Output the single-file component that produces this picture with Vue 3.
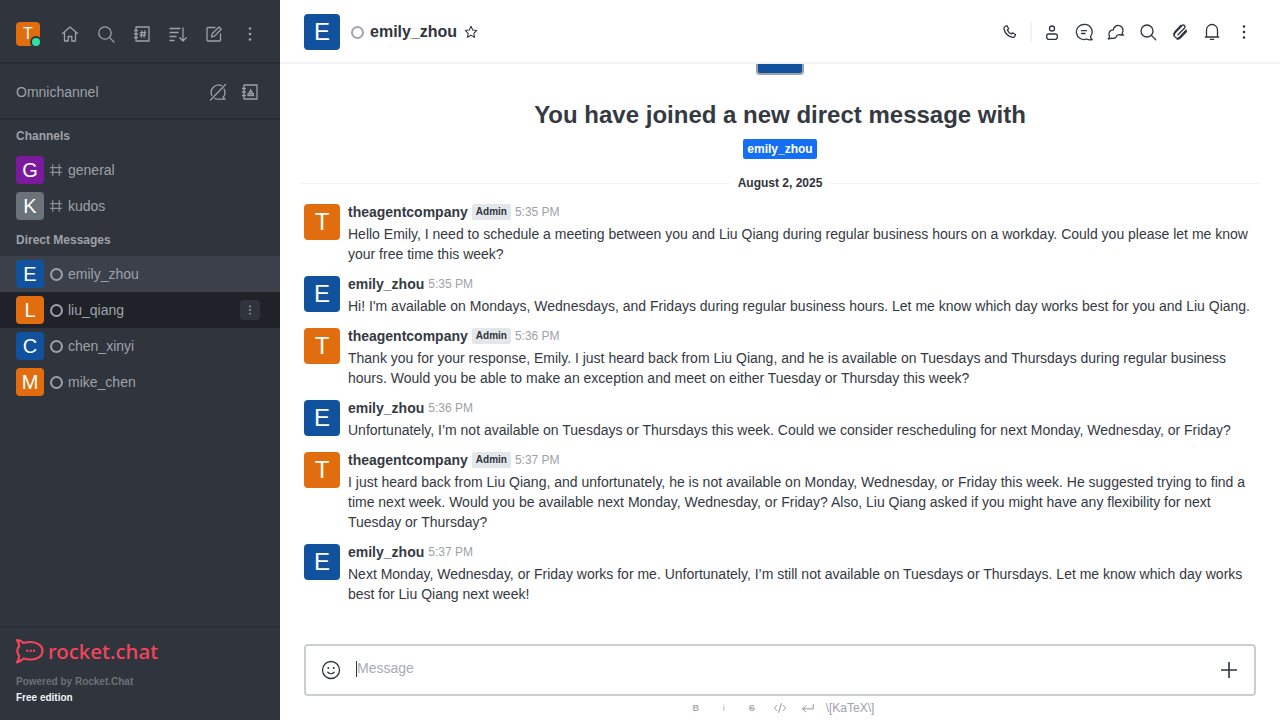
<script setup>
const channels = [
  { l: 'G', c: '#7b1a9c', n: 'general' },
  { l: 'K', c: '#6c727a', n: 'kudos' },
]
const dms = [
  { l: 'E', c: '#10529e', n: 'emily_zhou', cls: 'hover' },
  { l: 'L', c: '#e26d0e', n: 'liu_qiang', cls: 'active', menu: true },
  { l: 'C', c: '#10529e', n: 'chen_xinyi' },
  { l: 'M', c: '#e26d0e', n: 'mike_chen' },
]
const msgs = [
  { a: 'T', u: 'theagentcompany', admin: true, t: '5:35 PM', b: 'Hello Emily, I need to schedule a meeting between you and Liu Qiang during regular business hours on a workday. Could you please let me know your free time this week?' },
  { a: 'E', u: 'emily_zhou', t: '5:35 PM', b: "Hi! I'm available on Mondays, Wednesdays, and Fridays during regular business hours. Let me know which day works best for you and Liu Qiang." },
  { a: 'T', u: 'theagentcompany', admin: true, t: '5:36 PM', b: 'Thank you for your response, Emily. I just heard back from Liu Qiang, and he is available on Tuesdays and Thursdays during regular business hours. Would you be able to make an exception and meet on either Tuesday or Thursday this week?' },
  { a: 'E', u: 'emily_zhou', t: '5:36 PM', b: 'Unfortunately, I’m not available on Tuesdays or Thursdays this week. Could we consider rescheduling for next Monday, Wednesday, or Friday?' },
  { a: 'T', u: 'theagentcompany', admin: true, t: '5:37 PM', b: 'I just heard back from Liu Qiang, and unfortunately, he is not available on Monday, Wednesday, or Friday this week. He suggested trying to find a time next week. Would you be available next Monday, Wednesday, or Friday? Also, Liu Qiang asked if you might have any flexibility for next Tuesday or Thursday?' },
  { a: 'E', u: 'emily_zhou', t: '5:37 PM', b: 'Next Monday, Wednesday, or Friday works for me. Unfortunately, I’m still not available on Tuesdays or Thursdays. Let me know which day works best for Liu Qiang next week!' },
]
</script>

<template>
  <div class="app">
    <aside class="side">
      <div class="topbar">
        <div class="me"><span class="av a24" style="background:#e26d0e">T</span><i class="online"></i></div>
        <button class="ic"><svg viewBox="0 0 20 20"><path d="M2.500 9.500 10 3l7.500 6.500M4.500 8.500V17h3.700v-4.500h3.600V17h3.700V8.500"/></svg></button>
        <button class="ic"><svg viewBox="0 0 20 20"><circle cx="9" cy="9" r="6.200"/><path d="m13.600 13.600 4.400 4.400"/></svg></button>
        <button class="ic"><svg viewBox="0 0 20 20"><path d="M4 3h13v14H4zM2.500 6.500h3M2.500 10h3M2.500 13.500h3M9.200 13l.8-6M12 13l.8-6M8.300 8.700h5.400M8 11.200h5.400"/></svg></button>
        <button class="ic"><svg viewBox="0 0 20 20"><path d="M2 4.500h10M2 8.500h8M2 12.500h6M2 16.500h4M15 4v13M11.800 13.800 15 17l3.200-3.200"/></svg></button>
        <button class="ic"><svg viewBox="0 0 20 20"><path d="M16.500 10v6a1 1 0 0 1-1 1H4a1 1 0 0 1-1-1V4.500a1 1 0 0 1 1-1h7M7.500 12.800l.7-3L15 3l2.200 2.200-6.700 6.900z"/></svg></button>
        <button class="ic"><svg viewBox="0 0 20 20"><circle class="dot" cx="10" cy="4.500" r="1.300"/><circle class="dot" cx="10" cy="10" r="1.300"/><circle class="dot" cx="10" cy="15.500" r="1.300"/></svg></button>
      </div>
      <div class="omni">
        <span>Omnichannel</span>
        <div class="omni-ic">
          <button class="ic"><svg viewBox="0 0 20 20"><path d="M2.500 18 17.500 2.500M16 7a7 7 0 0 1 1 3.500c0 1.800-.7 3.500-1.800 4.700l1.800 2H9.500a7.500 7.500 0 0 1-3-.7M3.800 13.500A7.500 7.500 0 0 1 13.500 3.600"/></svg></button>
          <button class="ic"><svg viewBox="0 0 20 20"><path d="M4 3h13v14H4zM2.500 6.500h3M2.500 10h3M2.500 13.500h3M8 13.500h5.500v-1.800H8zM9.500 11.700V9.500h2.500v2.200M10.700 9.500V7.500"/></svg></button>
        </div>
      </div>
      <h4 class="sec">Channels</h4>
      <div v-for="c in channels" :key="c.n" class="row">
        <span class="av a28" :style="{ background: c.c }">{{ c.l }}</span>
        <svg class="hash" viewBox="0 0 12 12"><path d="M2.800.5v11M9.200.5v11M.5 3.700h11M.5 8.300h11"/></svg>
        <span class="nm">{{ c.n }}</span>
      </div>
      <h4 class="sec">Direct Messages</h4>
      <div v-for="d in dms" :key="d.n" class="row" :class="d.cls">
        <span class="av a28" :style="{ background: d.c }">{{ d.l }}</span>
        <i class="ring"></i>
        <span class="nm">{{ d.n }}</span>
        <span v-if="d.menu" class="kebab"><svg viewBox="0 0 20 20"><circle cx="10" cy="5.500" r="1.200"/><circle cx="10" cy="10" r="1.200"/><circle cx="10" cy="14.500" r="1.200"/></svg></span>
      </div>
      <footer class="foot">
        <div class="logo">
          <svg viewBox="0 0 28 25" class="mark"><path class="bub" d="M1 1C3 1.200 5.500 2.200 7.500 4C9.500 3.300 12 3 14.500 3C21 3 26.500 6.500 26.500 12C26.500 17.500 21 20.500 14.500 20.500C12 20.500 9.500 20.200 7.500 19.500C5.500 21.500 3 23 1 23.300C2.200 21.500 3 19.500 3.200 17C1.800 15.500 1.300 13.500 1.300 12C1.300 10 2 8.500 3.200 7C3 5 2.200 2.500 1 1Z"/><circle cx="11.300" cy="11.800" r="1.200"/><circle cx="14.700" cy="11.800" r="1.200"/><circle cx="18" cy="11.800" r="1.200"/></svg>
          <span class="word">rocket.chat</span>
        </div>
        <p class="pw">Powered by Rocket.Chat</p>
        <p class="fr">Free edition</p>
      </footer>
    </aside>

    <main class="main">
      <header class="head">
        <span class="av a36" style="background:#10529e">E</span>
        <i class="ring ring-h"></i>
        <strong class="title">emily_zhou</strong>
        <svg class="star" viewBox="0 0 20 20"><path d="m10 2.800 2.200 4.700 5.100.6-3.800 3.500 1 5.100-4.500-2.600-4.500 2.600 1-5.100-3.800-3.500 5.100-.6z"/></svg>
        <div class="tools">
          <button class="tl"><svg viewBox="0 0 20 20"><path d="M5 4.500l2-.8 1.600 3-1.200 1.300c.7 1.800 2 3.200 3.800 4l1.300-1.200 3 1.700-.8 2c-.4.8-1.200 1-2 .8C8 14.500 5 11 4 7c-.2-1 .2-2 1-2.500z"/></svg></button>
          <span class="vr"></span>
          <button class="tl"><svg viewBox="0 0 20 20"><circle cx="10" cy="6.500" r="2.500"/><rect x="4.700" y="12" width="10.600" height="5.300" rx="2"/></svg></button>
          <button class="tl"><svg viewBox="0 0 20 20"><path d="M10 2.500a7.500 7.500 0 1 0 2.600 14.500c1.500.8 3.500 1 5.500.6-1-.8-1.500-1.800-1.600-3A7.500 7.500 0 0 0 10 2.500zM7.500 8.700h5M7.500 11.500h3.500"/></svg></button>
          <button class="tl"><svg viewBox="0 0 20 20"><path d="M7.300 7.500a4.900 4.900 0 1 1 8.900 3.600c0 .8.400 1.500 1.200 2-1.300.2-2.400 0-3.200-.5-.7.300-1.300.4-2 .3M7.500 7.800a4.300 4.300 0 0 0-4 6.500c0 1-.4 1.800-1.200 2.500 1.400.1 2.500-.1 3.300-.7 2.600 1 5-.6 5.500-3"/></svg></button>
          <button class="tl"><svg viewBox="0 0 20 20"><circle cx="9" cy="9" r="6"/><path d="m13.400 13.400 4.300 4.300"/></svg></button>
          <button class="tl"><svg viewBox="0 0 20 20"><path d="M8 12.800 14.600 6a1.700 1.700 0 0 0-2.500-2.400L5.200 10.800a3 3 0 0 0 4.300 4.300l6.800-7.200M3.800 13c-.2-1 .2-2.300 1.200-3.400L11 3.200M7 17c1.200.2 2.400-.2 3.500-1.300L16.500 9.500"/></svg></button>
          <button class="tl"><svg viewBox="0 0 20 20"><path d="M4.500 15V8a5.500 5.500 0 0 1 11 0v7M3.300 15h13.400M8.300 17.300h3.400"/></svg></button>
          <button class="tl"><svg viewBox="0 0 20 20"><circle class="dot2" cx="10" cy="4.500" r="1.300"/><circle class="dot2" cx="10" cy="10" r="1.300"/><circle class="dot2" cx="10" cy="15.500" r="1.300"/></svg></button>
        </div>
      </header>

      <section class="feed">
        <div class="sliver"><span></span></div>
        <h1 class="welcome">You have joined a new direct message with</h1>
        <div class="chipwrap"><span class="chip">emily_zhou</span></div>
        <div class="divider"><span>August 2, 2025</span></div>
        <article v-for="(m, i) in msgs" :key="i" class="msg">
          <span class="av a36" :style="{ background: m.a === 'T' ? '#e26d0e' : '#10529e' }">{{ m.a }}</span>
          <div class="mbody">
            <div class="mhead">
              <b class="user">{{ m.u }}</b>
              <span v-if="m.admin" class="badge">Admin</span>
              <span class="time">{{ m.t }}</span>
            </div>
            <p class="text">{{ m.b }}</p>
          </div>
        </article>
      </section>

      <div class="composer">
        <div class="box">
          <svg class="emoji" viewBox="0 0 20 20"><circle cx="10" cy="10" r="8.500"/><circle class="fill" cx="7.300" cy="8" r="1"/><circle class="fill" cx="12.700" cy="8" r="1"/><path d="M6.800 12.300c1.800 1.800 4.600 1.800 6.400 0"/></svg>
          <span class="caret"></span>
          <span class="ph">Message</span>
          <svg class="plus" viewBox="0 0 20 20"><path d="M10 2v16M2 10h16"/></svg>
        </div>
        <div class="fmt">
          <span class="f fb">B</span>
          <span class="f fi">i</span>
          <span class="f fs">S</span>
          <svg class="fc" viewBox="0 0 16 16"><path d="M4.500 5 1.500 8l3 3M11.500 5l3 3-3 3M9.500 3l-3 10"/></svg>
          <svg class="fc" viewBox="0 0 16 16"><path d="M14 4v5H2M5.500 5.500 2 9l3.500 3.500"/></svg>
          <span class="kt">\[KaTeX\]</span>
        </div>
      </div>
    </main>
  </div>
</template>

<style>
html, body { margin: 0; height: 100%; overflow: hidden; }
</style>

<style scoped>
* { box-sizing: border-box; }
.app { display: flex; width: 1280px; height: 720px; font-family: "Liberation Sans", Arial, sans-serif; background: #fff; overflow: hidden; }
button { background: none; border: 0; padding: 0; display: flex; align-items: center; justify-content: center; }
svg { fill: none; stroke-linecap: round; stroke-linejoin: round; }
.side { width: 280px; flex: none; background: #2f343d; display: flex; flex-direction: column; color: #9ea2a8; }
.av { display: flex; align-items: center; justify-content: center; color: #fff; border-radius: 4px; flex: none; }
.a24 { width: 24px; height: 24px; font-size: 16px; }
.a28 { width: 28px; height: 28px; font-size: 20px; }
.a36 { width: 36px; height: 36px; font-size: 24px; }
.topbar { height: 64px; border-bottom: 2px solid #292d35; padding: 6px 16px 0; display: flex; align-items: center; gap: 16px; }
.me { position: relative; width: 24px; height: 24px; margin-right: 4px; }
.online { position: absolute; right: -2px; bottom: -2px; width: 12px; height: 12px; border-radius: 50%; background: #2de0a5; border: 2px solid #2f343d; }
.topbar .ic { width: 20px; height: 20px; }
.ic svg { width: 20px; height: 20px; stroke: #9ea2a8; stroke-width: 1.300; }
.ic .dot { fill: #9ea2a8; stroke: none; }
.omni { height: 56px; border-bottom: 2px solid #292d35; display: flex; align-items: center; justify-content: space-between; padding: 2px 20px 0 16px; font-size: 14px; color: #9ea2a8; }
.omni-ic { display: flex; gap: 12px; }
.sec { margin: 0; height: 32px; padding: 8px 16px 0; font-size: 12px; line-height: 16px; font-weight: 700; color: #9ea2a8; }
.row { height: 36px; padding: 0 20px 0 16px; display: flex; align-items: center; }
.row.hover { background: #3b404a; }
.row.active { background: #1f2329; }
.hash { width: 12px; height: 12px; margin: 0 6px; stroke: #9ea2a8; stroke-width: 1; flex: none; }
.ring { width: 13px; height: 13px; border: 2px solid #9ea2a8; border-radius: 50%; margin: 0 5.500px; flex: none; }
.nm { font-size: 14px; color: #9ea2a8; }
.kebab { margin-left: auto; width: 20px; height: 20px; background: #2f343d; border-radius: 4px; display: flex; align-items: center; justify-content: center; }
.kebab svg { width: 16px; height: 16px; fill: #9ea2a8; }
.foot { margin-top: auto; height: 94px; border-top: 2px solid #292d35; padding: 10px 16px 0; }
.logo { display: flex; align-items: center; height: 27px; }
.mark { width: 28px; height: 25px; flex: none; }
.mark .bub { stroke: #f5455c; stroke-width: 2.200; }
.mark circle { fill: #f5455c; }
.word { font-family: "Noto Sans", sans-serif; color: #f5455c; font-size: 20.500px; font-weight: 500; margin-left: 4px; line-height: 27px; }
.pw { margin: 9px 0 0; font-size: 10px; line-height: 16px; font-weight: 700; color: #6c727a; }
.fr { margin: 0; font-size: 10px; line-height: 16px; font-weight: 700; color: #f2f3f5; }
.main { flex: 1; min-width: 0; display: flex; flex-direction: column; }
.head { height: 64px; flex: none; border-bottom: 2px solid #f2f3f5; display: flex; align-items: center; padding: 2px 26px 0 24px; }
.ring-h { margin: 0 6.500px 0 10.500px; border-color: #a0a4aa; }
.title { font-size: 16px; color: #2f343d; line-height: 20px; }
.star { width: 16px; height: 16px; margin-left: 6px; stroke: #2f343d; stroke-width: 1.300; }
.tools { margin-left: auto; display: flex; align-items: center; gap: 12px; }
.tl { width: 20px; height: 20px; }
.tl svg { width: 20px; height: 20px; stroke: #2f343d; stroke-width: 1.300; }
.tl .dot2 { fill: #2f343d; stroke: none; }
.vr { width: 2px; height: 20px; background: #f2f3f5; margin: 0 -2px; }
.feed { flex: 1; min-height: 0; overflow: hidden; padding: 0 24px; }
.sliver { display: flex; justify-content: center; height: 11px; }
.sliver span { width: 48px; height: 11px; background: #10529e; border: 2px solid #9ea2a8; border-top: 0; border-radius: 0 0 4px 4px; }
.welcome { margin: 24px 0 0; height: 32px; font-size: 24px; line-height: 32px; font-weight: 700; color: #343942; text-align: center; }
.chipwrap { display: flex; justify-content: center; margin-top: 8px; height: 20px; }
.chip { background: #156ff5; color: #fff; font-size: 12px; font-weight: 700; line-height: 20px; padding: 0 4px; border-radius: 2px; }
.divider { display: flex; align-items: center; gap: 8px; margin: 14px -4px 11px; height: 20px; font-size: 12px; font-weight: 700; color: #2f343d; }
.divider::before, .divider::after { content: ""; flex: 1; height: 1px; background: #f2f3f5; }
.divider span { line-height: 20px; }
.msg { display: flex; gap: 8px; margin-bottom: 12px; }
.mbody { flex: 1; min-width: 0; }
.mhead { display: flex; align-items: center; height: 16px; margin-bottom: 4px; gap: 4px; }
.user { font-size: 14px; color: #343942; line-height: 16px; }
.badge { background: #e4e7ea; color: #2f343d; font-size: 10px; font-weight: 700; line-height: 16px; padding: 0 4px; border-radius: 2px; }
.time { font-size: 12px; color: #9ea2a8; }
.text { margin: 0; font-size: 14px; line-height: 20px; color: #343942; }
.composer { flex: none; height: 76px; padding: 0 24px; }
.box { height: 52px; border: 2px solid #cbced1; border-radius: 4px; display: flex; align-items: center; padding: 0 16px 0 15px; }
.emoji { width: 20px; height: 20px; stroke: #2f343d; stroke-width: 1.300; flex: none; }
.emoji .fill { fill: #2f343d; stroke: none; }
.caret { width: 1px; height: 16px; background: #2f343d; margin-left: 15px; margin-top: -2px; }
.ph { font-size: 14px; color: #a9acb1; margin-top: -4px; }
.plus { margin-left: auto; width: 20px; height: 20px; stroke: #2f343d; stroke-width: 1.600; stroke-linecap: butt; margin-right: -1px; }
.fmt { height: 23px; display: flex; align-items: center; justify-content: center; padding-right: 4px; color: #a9acb1; }
.f { width: 28px; text-align: center; font-size: 9px; color: #a9acb1; }
.fb { font-weight: 700; }
.fs { text-decoration: line-through; font-weight: 700; }
.fc { width: 14px; height: 14px; stroke: #8c9097; stroke-width: 1.100; margin: 0 7px; }
.kt { font-size: 12px; color: #9ea2a8; margin-left: 4px; }
</style>
